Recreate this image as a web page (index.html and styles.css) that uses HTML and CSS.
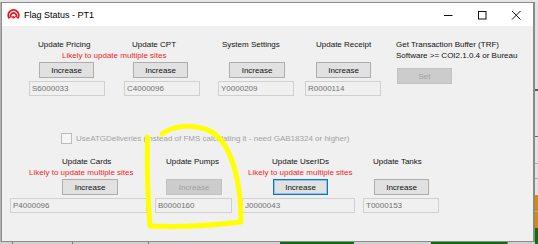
FILE: index.html
```html
<!DOCTYPE html>
<html>
<head>
<meta charset="utf-8">
<title>Flag Status - PT1</title>
<link rel="stylesheet" href="styles.css">
</head>
<body>
<div class="desk-top"></div>
<div class="mid">
  <div class="desk-left"></div>
  <div class="window">
    <div class="titlebar">
      <svg class="app-icon" width="13" height="13" viewBox="0 0 12 12">
        <path d="M2.2 9.6 A4.8 4.8 0 1 1 9.8 9.6" fill="none" stroke="#e8141b" stroke-width="1.8"/>
        <path d="M4 8.8 A2.6 2.6 0 1 1 8 8.8" fill="none" stroke="#e8141b" stroke-width="1.5"/>
        <circle cx="6" cy="8.6" r="1.2" fill="#e8141b"/>
      </svg>
      <span class="title">Flag Status - PT1</span>
      <div class="caption">
        <span class="cap"><svg width="10" height="10" viewBox="0 0 10 10"><path d="M1 5.5 H9.5" stroke="#111" stroke-width="1"/></svg></span>
        <span class="cap"><svg width="10" height="10" viewBox="0 0 10 10"><rect x="1.5" y="1.5" width="7.5" height="7.5" fill="none" stroke="#111" stroke-width="1"/></svg></span>
        <span class="cap"><svg width="10" height="10" viewBox="0 0 10 10"><path d="M1 1 L9.5 9.5 M9.5 1 L1 9.5" stroke="#111" stroke-width="1"/></svg></span>
      </div>
    </div>
    <div class="content">
      <div class="row r1">
        <div class="field f-pricing">
          <div class="lbl">Update Pricing</div>
          <div class="note">Likely to update multiple sites</div>
          <button class="btn">Increase</button>
          <div class="tb">S6000033</div>
        </div>
        <div class="field f-cpt">
          <div class="lbl">Update CPT</div>
          <div class="note"></div>
          <button class="btn">Increase</button>
          <div class="tb">C4000096</div>
        </div>
        <div class="field f-sys">
          <div class="lbl">System Settings</div>
          <div class="note"></div>
          <button class="btn">Increase</button>
          <div class="tb">Y0000209</div>
        </div>
        <div class="field f-receipt">
          <div class="lbl">Update Receipt</div>
          <div class="note"></div>
          <button class="btn">Increase</button>
          <div class="tb">R0000114</div>
        </div>
        <div class="field f-trf">
          <div class="lbl">Get Transaction Buffer (TRF)</div>
          <div class="lbl">Software &gt;= COI2.1.0.4 or Bureau</div>
          <button class="btn disabled">Set</button>
        </div>
      </div>
      <div class="check-row">
        <span class="checkbox"></span>
        <span class="check-text">UseATGDeliveries (Instead of FMS calculating it - need GAB18324 or higher)</span>
      </div>
      <div class="row r2">
        <div class="field f-cards">
          <div class="lbl">Update Cards</div>
          <div class="note">Likely to update multiple sites</div>
          <button class="btn">Increase</button>
          <div class="tb">P4000096</div>
        </div>
        <div class="field f-pumps">
          <div class="lbl">Update Pumps</div>
          <div class="note"></div>
          <button class="btn disabled">Increase</button>
          <div class="tb">B0000160</div>
        </div>
        <div class="field f-users">
          <div class="lbl">Update UserIDs</div>
          <div class="note">Likely to update multiple sites</div>
          <button class="btn focused">Increase</button>
          <div class="tb">J0000043</div>
        </div>
        <div class="field f-tanks">
          <div class="lbl">Update Tanks</div>
          <div class="note"></div>
          <button class="btn">Increase</button>
          <div class="tb">T0000153</div>
        </div>
      </div>
      <svg class="scribble" width="531" height="215" viewBox="2 26 531 215">
        <path d="M147.5 137 C147 160 147.5 195 150 226 C180 227.5 215 225 241 222 C241 200 238 176 231 158 C226 145 218 133 205 129 C190 124 172 126 162 134" fill="none" stroke="#ffff00" stroke-width="5" stroke-linecap="round" stroke-linejoin="round"/>
      </svg>
    </div>
  </div>
  <div class="desk-right">
    <div class="seg-gray s1"></div>
    <div class="seg-mark m1"></div>
    <div class="seg-gray s2"></div>
    <div class="seg-mark m2"></div>
    <div class="seg-gray s3"></div>
    <div class="seg-line"></div>
    <div class="seg-gray s4"></div>
    <div class="seg-line"></div>
    <div class="seg-gray s5"></div>
    <div class="seg-orange o1"></div>
    <div class="seg-line"></div>
    <div class="seg-orange o2"></div>
    <div class="seg-green g-right"></div>
  </div>
</div>
<div class="desk-bottom">
  <div class="b-gray w12"></div>
  <div class="b-div"></div>
  <div class="b-gray w59"></div>
  <div class="b-div"></div>
  <div class="b-gray w75"></div>
  <div class="b-div"></div>
  <div class="b-gray w131"></div>
  <div class="b-green w74"></div>
  <div class="b-gray w77"></div>
  <div class="b-green w76"></div>
  <div class="b-div"></div>
  <div class="b-gray w27"></div>
  <div class="b-green w3"></div>
</div>
</body>
</html>
```
FILE: styles.css
```css
* { box-sizing: border-box; }
html, body { margin: 0; padding: 0; }
body {
  width: 538px;
  height: 244px;
  overflow: hidden;
  background: #e4e4e4;
  font-family: "Liberation Sans", Arial, sans-serif;
  font-size: 8px;
  color: #111;
}

.desk-top { height: 2px; background: #e6e6e6; }
.mid { display: flex; height: 240px; }
.desk-left { width: 1px; background: #b4b4b4; }

.window {
  width: 534px;
  height: 240px;
  border: 1px solid #8c8c8c;
  border-right: 2px solid #8a8a8a;
  display: flex;
  flex-direction: column;
  background: #f0f0f0;
}

.titlebar {
  height: 23px;
  flex: none;
  background: #fff;
  display: flex;
  align-items: center;
}
.app-icon { margin-left: 5px; flex: none; }
.title {
  margin-left: 4px;
  font-size: 9px;
  color: #000;
  white-space: nowrap;
}
.caption { margin-left: auto; display: flex; height: 23px; }
.cap {
  width: 34px;
  height: 23px;
  display: flex;
  align-items: center;
  justify-content: center;
}

.content {
  position: relative;
  flex: 1;
  background: #f0f0f0;
}

.row { display: flex; align-items: flex-start; }
.r1 { padding: 13px 0 0 27px; }
.r2 { padding-left: 8px; margin-top: 12px; }

.field {
  display: flex;
  flex-direction: column;
  align-items: flex-start;
  flex: none;
}
.lbl, .note {
  height: 11px;
  line-height: 11px;
  white-space: nowrap;
}
.lbl { color: #111; }
.note { color: #f41e1e; }

.btn {
  margin-top: 1px;
  width: 55px;
  height: 16px;
  padding: 0;
  font-family: "Liberation Sans", Arial, sans-serif;
  font-size: 8px;
  color: #111;
  background: #e1e1e1;
  border: 1px solid #adadad;
  border-radius: 0;
}
.btn.disabled {
  background: #cccccc;
  border-color: #c2c2c2;
  color: #a2a2a2;
}
.btn.focused {
  border-color: #0a74d2;
  box-shadow: inset 0 0 0 1px #8fc0ea;
}

.tb {
  align-self: stretch;
  margin-top: 3px;
  height: 15px;
  border: 1px solid #d0d0d0;
  padding-left: 2px;
  line-height: 13px;
  color: #707070;
  background: #f0f0f0;
}

/* row 1 */
.f-pricing { width: 76px; }
.f-pricing .lbl { margin-left: 9px; }
.f-pricing .note { margin-left: 33px; }
.f-pricing .btn { margin-left: 10px; }

.f-cpt { width: 76px; margin-left: 19px; }
.f-cpt .lbl { margin-left: 8px; }
.f-cpt .btn { margin-left: 9px; }

.f-sys { width: 76px; margin-left: 18px; }
.f-sys .lbl { margin-left: 4px; }
.f-sys .btn { margin-left: 11px; width: 56px; }

.f-receipt { width: 76px; margin-left: 11px; }
.f-receipt .lbl { margin-left: 11px; }
.f-receipt .btn { margin-left: 11px; }

.f-trf { margin-left: 15px; }
.f-trf .btn { margin-left: 1px; margin-top: 7px; }

/* checkbox */
.check-row {
  display: flex;
  align-items: center;
  margin-top: 37px;
  padding-left: 59px;
  height: 11px;
}
.checkbox {
  width: 11px;
  height: 11px;
  border: 1px solid #bcbcbc;
  background: #f5f5f5;
  flex: none;
}
.check-text {
  margin-left: 4px;
  color: #a3a3a3;
  white-space: nowrap;
  line-height: 11px;
}

/* row 2 */
.f-cards { width: 137px; }
.f-cards .lbl { margin-left: 52px; }
.f-cards .note { margin-left: 19px; }
.f-cards .btn { margin-left: 52px; width: 56px; }

.f-pumps { width: 77px; margin-left: 8px; }
.f-pumps .lbl { margin-left: 11px; }
.f-pumps .btn { margin-left: 11px; width: 56px; }

.f-users { width: 113px; margin-left: 10px; }
.f-users .lbl { margin-left: 30px; }
.f-users .note { margin-left: 6px; }
.f-users .btn { margin-left: 31px; }

.f-tanks { width: 76px; margin-left: 8px; }
.f-tanks .lbl { margin-left: 10px; }
.f-tanks .btn { margin-left: 11px; }

.scribble {
  position: absolute;
  left: 0;
  top: 0;
  pointer-events: none;
}

/* desktop behind window */
.desk-right {
  width: 3px;
  display: flex;
  flex-direction: column;
}
.seg-gray { background: #e2e2e2; }
.s1 { height: 87px; }
.m1 { height: 2px; background: #5a5a5a; }
.s2 { height: 45px; }
.m2 { height: 1px; background: #6a6a6a; }
.s3 { height: 26px; }
.seg-line { height: 1px; background: #b0b0b0; }
.s4 { height: 14px; }
.s5 { height: 16px; }
.seg-orange { background: #d88a06; }
.o1 { height: 16px; }
.o2 { height: 16px; }
.seg-green { background: #0c6e0c; }
.g-right { flex: 1; }

.desk-bottom { display: flex; height: 2px; }
.b-gray { background: #cfcfcf; }
.b-div { width: 1px; background: #7a7a7a; }
.b-green { background: #0c6e0c; }
.w3 { width: 3px; }
.w12 { width: 12px; }
.w27 { width: 27px; }
.w59 { width: 59px; }
.w74 { width: 74px; }
.w75 { width: 75px; }
.w76 { width: 76px; }
.w77 { width: 77px; }
.w131 { width: 131px; }
```
